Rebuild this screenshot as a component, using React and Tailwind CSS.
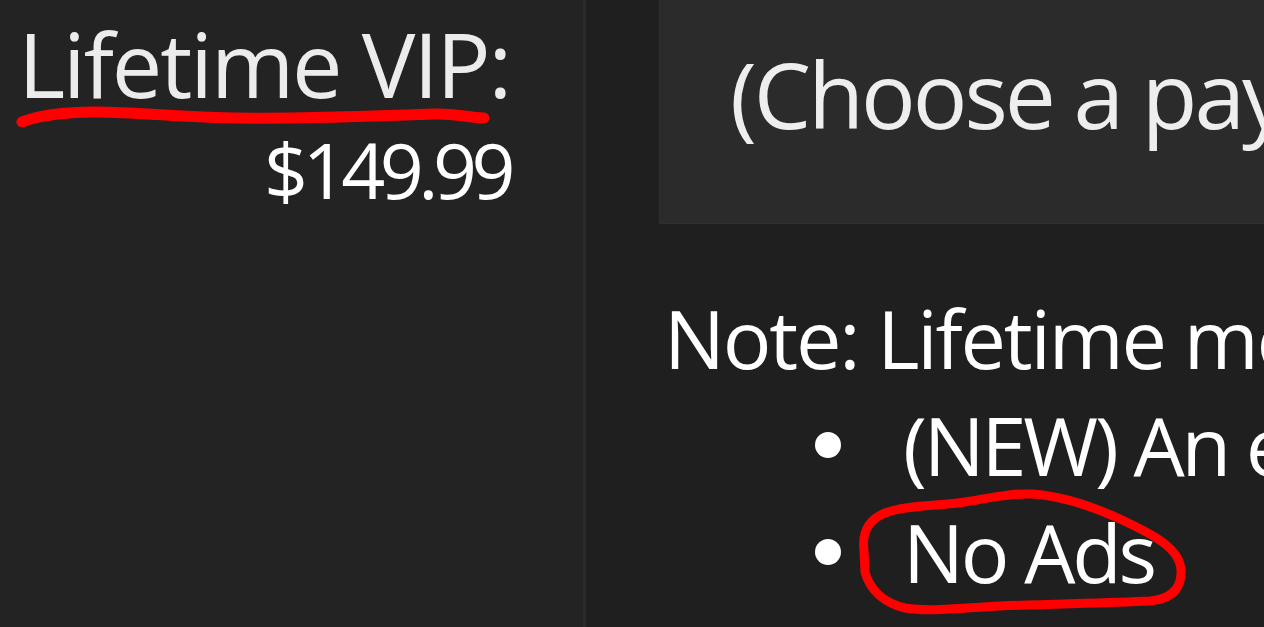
export default function App() {
  return (
    <div className="relative flex h-[627px] w-full overflow-hidden bg-[#1f1f1f] font-['Open_Sans','Noto_Sans',sans-serif]">
      {/* left: plan summary */}
      <aside className="flex w-[583px] shrink-0 flex-col items-end bg-[#232323] pr-[73px] pt-[18px] text-right">
        <p className="whitespace-nowrap text-[90px] leading-none tracking-[-2.1px] text-[#ececec]">Lifetime VIP:</p>
        <p className="mt-[23px] whitespace-nowrap text-[77px] leading-none tracking-[-5.5px] text-white">$149.99</p>
      </aside>
      <div className="w-[3px] shrink-0 bg-[#2a2a2a]" />

      {/* right: payment area */}
      <main className="min-w-0 flex-1 pl-[73px]">
        <div className="h-[224px] overflow-hidden border-b border-l border-[#303030] bg-[#2b2b2b] pl-[70px] pt-[49px]">
          <p className="whitespace-nowrap text-[91px] leading-none tracking-[-3px] text-[#eeeeee]">
            (Choose a payment method above)
          </p>
        </div>

        <div className="mt-[60px] overflow-hidden pl-[5px] text-[81px] leading-[107px] tracking-[-2.2px] text-white">
          <p className="whitespace-nowrap">Note: Lifetime membership includes</p>
          <ul className="pl-[151px] tracking-[-3.2px]">
            <li className="flex items-center gap-[62px] whitespace-nowrap">
              <span className="h-[26px] w-[26px] shrink-0 rounded-full bg-white" />
              (NEW) An exclusive VIP badge
            </li>
            <li className="flex items-center gap-[62px] whitespace-nowrap">
              <span className="h-[26px] w-[26px] shrink-0 rounded-full bg-white" />
              No Ads
            </li>
          </ul>
        </div>
      </main>

      {/* red hand-drawn annotations */}
      <svg
        className="pointer-events-none absolute inset-0 h-[627px] w-[1264px]"
        viewBox="0 0 1264 627"
        fill="none"
        stroke="#ff0000"
        strokeLinecap="round"
        strokeLinejoin="round"
      >
        <path
          strokeWidth="11"
          d="M22 122 C40 115 70 112 95 112 C140 112 170 117 233 118 C300 119 380 116 433 114 C455 113 462 117 484 118"
        />
        <path
          strokeWidth="9"
          d="M864 550 C862 532 868 520 885 513 C905 505 940 506 965 502 C990 498 1010 493 1032 494 C1062 496 1092 506 1122 520 C1152 534 1180 548 1181 570 C1182 588 1172 599 1150 601 C1110 603 1050 604 1000 606 C960 608 930 612 905 608 C884 603 870 590 865 572 Z"
        />
      </svg>
    </div>
  )
}
